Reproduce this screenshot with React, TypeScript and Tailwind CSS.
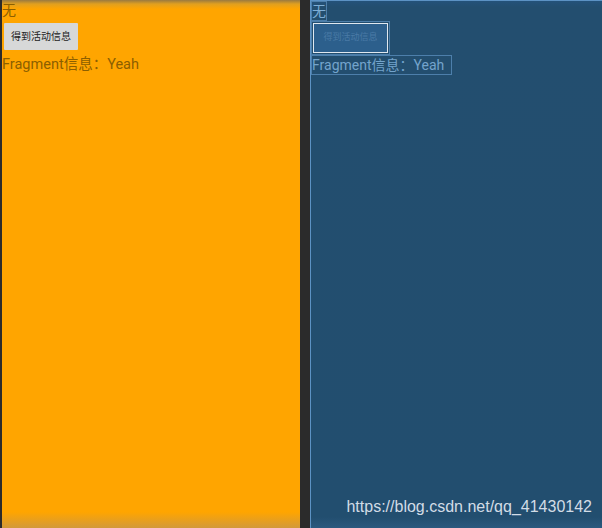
import React from 'react';

const cjk = "font-['Roboto','Noto_Sans_CJK_SC',sans-serif]";

const PhonePreview: React.FC = () => (
	<div className="w-[300px] shrink-0 h-[528px] border-l-2 border-[#2b2b2b] bg-[linear-gradient(to_bottom,#9a7a40_0px,#e0a020_4px,#ffa500_9px,#ffa500_512px,#d2993a_528px)]">
		<div className={`${cjk} text-[14px] leading-[20px] text-[#8c5f00]`}>无</div>
		<button
			type="button"
			className={`${cjk} ml-[2px] mt-[3px] h-[27px] px-[7px] bg-[#d7d8d8] text-[10px] text-[#222] rounded-[1px]`}>
			得到活动信息
		</button>
		<div className={`${cjk} mt-[6px] text-[14.5px] leading-[18px] text-[#8c5f00]`}>
			Fragment信息：Yeah
		</div>
	</div>
);

const Blueprint: React.FC = () => (
	<div className="flex-1 min-w-0 h-[528px] border-l border-t border-[#5c92c4] bg-[linear-gradient(to_bottom,#24527a_0px,#234e6f_6px,#224e6f_516px,#2c5a80_528px)] relative">
		<div className={`${cjk} w-[16px] h-[20px] border border-[#4d7fab] text-[14px] leading-[18px] text-[#7eaed6]`}>无</div>
		<div className="w-[79px] h-[34px] border border-[#4d7fab] p-[1px]">
			<div className={`${cjk} w-full h-full border border-[#e0e8f0] bg-[#2c5f8c] flex items-center justify-center text-[9px] text-[#4a7aa6]`}>
				得到活动信息
			</div>
		</div>
		<div className={`${cjk} w-[141px] h-[20px] border border-[#4d7fab] text-[14px] leading-[18px] text-[#74a4cc]`}>
			Fragment信息：Yeah
		</div>
		<div className="absolute right-[10px] bottom-[9px] font-['Liberation_Sans',sans-serif] text-[16px] text-[#d2dce6]">
			https://blog.csdn.net/qq_41430142
		</div>
	</div>
);

const App: React.FC = () => {
	return (
		<div className="flex w-[602px] h-[528px] overflow-hidden bg-[#2b2b2b]">
			<PhonePreview />
			<div className="w-[10px] shrink-0 bg-[#2b2b2b]" />
			<Blueprint />
		</div>
	);
};

export default App;
